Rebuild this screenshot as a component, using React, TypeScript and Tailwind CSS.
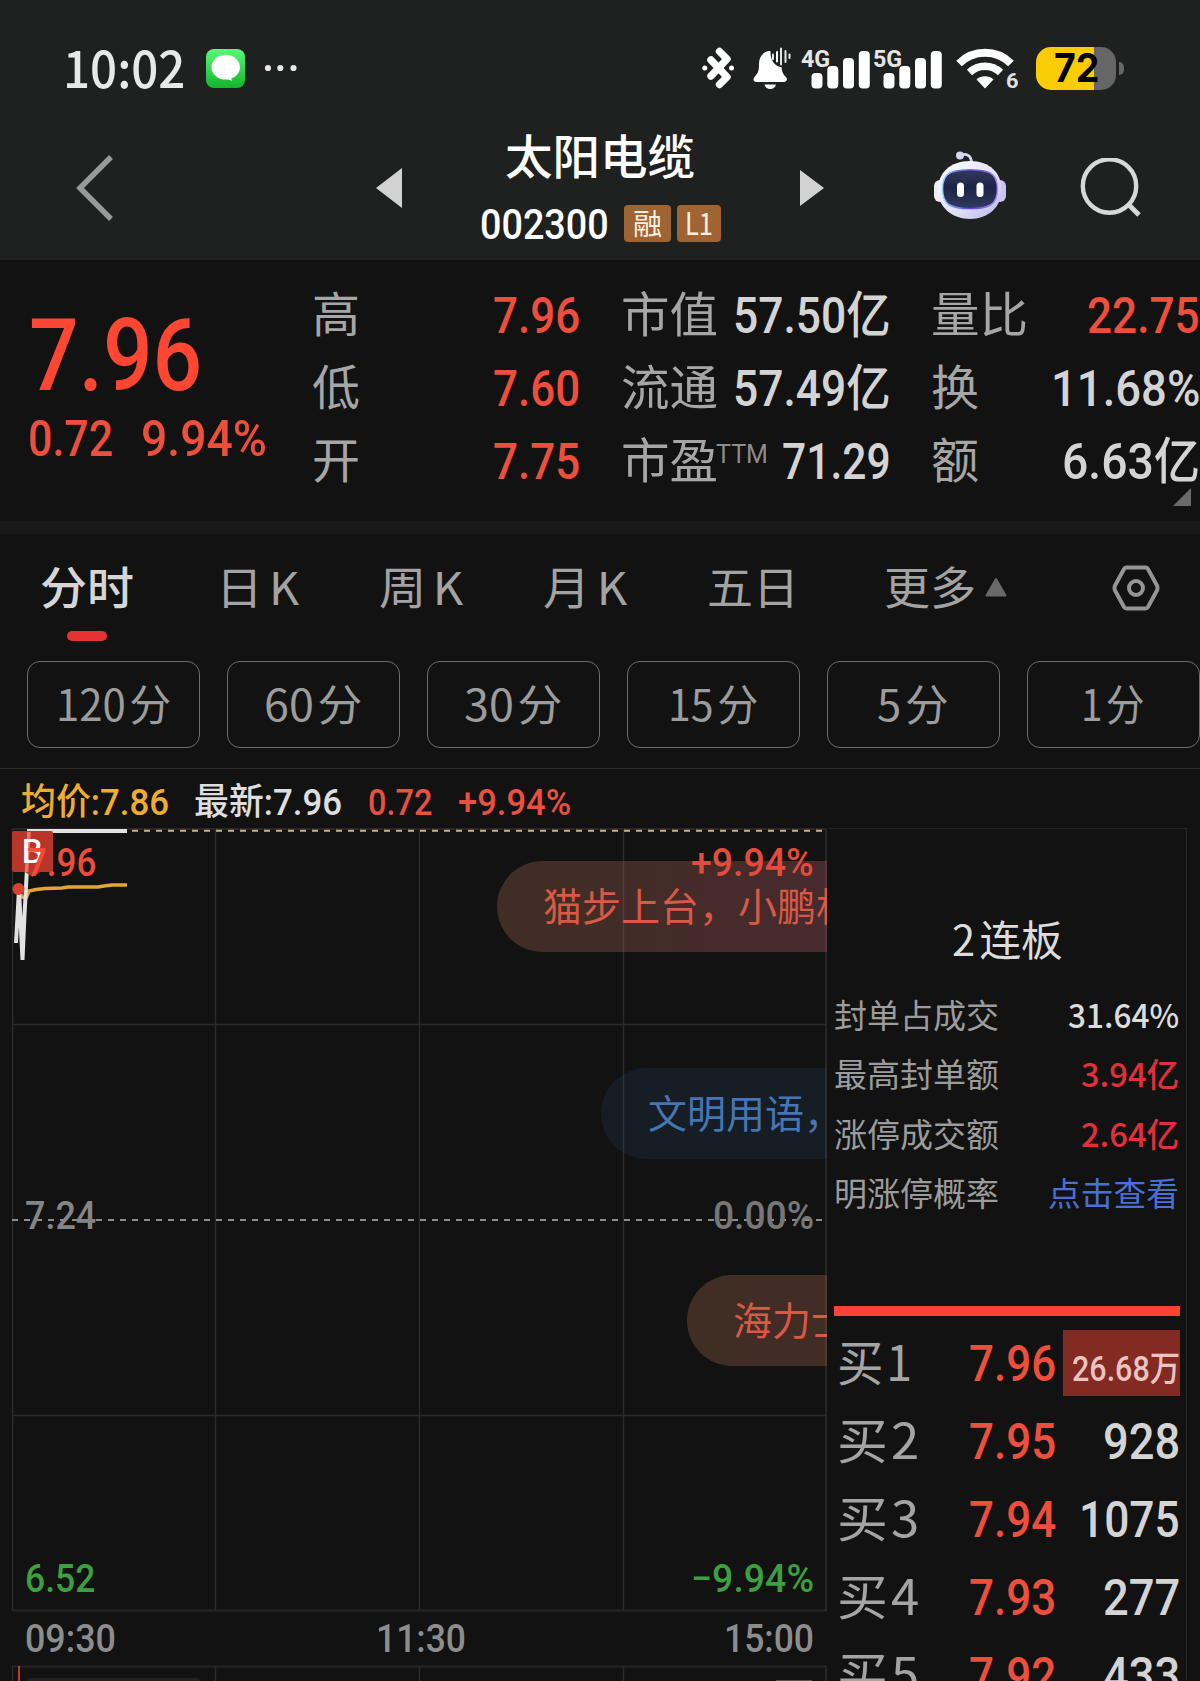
import { useLayoutEffect, useRef, useState } from "react";
import type { ReactNode } from "react";
import clsx from "clsx";

const DIN = "font-['Roboto','Noto_Sans_CJK_SC',sans-serif] font-medium";
const CJK = "font-['Noto_Sans_CJK_SC',sans-serif]";

/* One line of text, condensed or widened to fill the width of its box. */
function Fit({ children, className }: { children: ReactNode; className?: string }) {
  const box = useRef<HTMLSpanElement>(null);
  const inner = useRef<HTMLSpanElement>(null);
  const [scale, setScale] = useState(1);
  useLayoutEffect(() => {
    if (box.current && inner.current && inner.current.offsetWidth) {
      setScale(box.current.clientWidth / inner.current.offsetWidth);
    }
  }, []);
  return (
    <span ref={box} className={clsx("block shrink-0 whitespace-nowrap", className)}>
      <span ref={inner} className="inline-block origin-left" style={{ transform: `scaleX(${scale})` }}>
        {children}
      </span>
    </span>
  );
}

function Signal({ label }: { label: string }) {
  return (
    <div className="relative h-[42px] w-[69px] shrink-0">
      <svg className="block" width="69" height="42" viewBox="0 0 69 42" fill="#fff">
        <rect x="10.5" y="26" width="11" height="15.5" rx="4" />
        <rect x="26.3" y="19" width="11" height="22.5" rx="4" />
        <rect x="42" y="11" width="11" height="30.5" rx="4" />
        <rect x="57.8" y="4" width="11" height="37.5" rx="4" />
      </svg>
      <Fit className="absolute top-0 left-0 w-[29px] font-['Roboto',sans-serif] text-[24px] leading-[24px] font-bold text-[#e6e6e6]">
        {label}
      </Fit>
    </div>
  );
}

function StatusBar() {
  return (
    <div className="flex h-[136px] items-center">
      <Fit className={clsx(CJK, "mr-[2px] ml-[63px] w-[122px] pb-[5px] text-[51px] leading-[52px] font-medium text-[#e8e8e8]")}>10:02</Fit>
      <svg className="ml-[19px] shrink-0" width="39" height="39" viewBox="0 0 39 39">
        <defs>
          <linearGradient id="msg" x1="0" y1="0" x2="0" y2="1">
            <stop offset="0" stopColor="#5df777" />
            <stop offset="1" stopColor="#12b52c" />
          </linearGradient>
        </defs>
        <rect width="39" height="39" rx="8" fill="url(#msg)" />
        <ellipse cx="19.7" cy="18.2" rx="14.2" ry="12.4" fill="#fff" />
        <path d="M19 28.5 L24.5 27.5 L26 32 Z" fill="#fff" />
      </svg>
      <svg className="ml-[19px] shrink-0" width="34" height="10" viewBox="0 0 34 10" fill="#e8e8e8">
        <circle cx="4" cy="5" r="3.1" />
        <circle cx="16.3" cy="5" r="3.1" />
        <circle cx="29.5" cy="5" r="3.1" />
      </svg>
      <svg className="ml-[404px] shrink-0" width="32" height="42" viewBox="0 0 32 42" fill="none" stroke="#fff" strokeWidth="7.4" strokeLinecap="round" strokeLinejoin="round">
        <path d="M9 13 L25 30 L17.5 37.500" />
        <path d="M9 29 L25 12 L17.500 4.500" />
        <circle cx="2.8" cy="21" r="2.5" fill="#fff" stroke="none" />
        <circle cx="29.5" cy="21" r="2.5" fill="#fff" stroke="none" />
      </svg>
      <svg className="ml-[19px] shrink-0" width="38" height="42" viewBox="0 0 38 42">
        <path d="M16 4 C9 5 6 11 6 17 C6 25 4.500 26.500 1.500 30 C-0.500 32.500 0.500 35 3.500 35 H30.500 C33.500 35 35 32.500 33 30 C30 27 29 25 28.500 20 C23 20 17 14 17.500 4 Z" fill="#fff" />
        <path d="M11.500 37.500 H23 C22 41 19.500 42 17.300 42 C15 42 12.500 41 11.500 37.500 Z" fill="#fff" />
        <g stroke="#e6e6e6" strokeWidth="2" strokeLinecap="round">
          <path d="M20 7.500 V12" />
          <path d="M24 5 V14.500" stroke="#fff" />
          <path d="M28 1.500 V17.500" />
          <path d="M32.500 4 V15" />
          <path d="M36.500 7.500 V11" />
        </g>
      </svg>
      <div className="ml-[10px] flex gap-[3px]">
        <Signal label="4G" />
        <Signal label="5G" />
      </div>
      <svg className="ml-[14px] shrink-0" width="58" height="42" viewBox="0 0 58 42" fill="none" stroke="#fff">
        <path d="M3 16.500 A37 37 0 0 1 55 16.500" strokeWidth="8" />
        <path d="M13.500 25.500 A22.500 22.500 0 0 1 44.500 25.500" strokeWidth="7.500" />
        <path d="M20.500 32.500 C25 28.300 33 28.300 37.500 32.500 L29 41.500 Z" fill="#fff" stroke="none" />
      </svg>
      <Fit className="-ml-[8px] w-[12px] pt-[25px] font-['Roboto',sans-serif] text-[20px] leading-[20px] font-bold text-[#e0e0e0]">6</Fit>
      <div className="ml-[18px] flex h-[43px] w-[80px] shrink-0 items-center justify-center rounded-[15px] bg-[linear-gradient(90deg,#facc06_0_58px,#666_58px)]">
        <Fit className="w-[45px] font-['Inter',sans-serif] text-[40px] leading-[40px] font-bold text-black">72</Fit>
      </div>
      <div className="ml-[3px] h-[13px] w-[5px] rounded-r-full bg-[#666]" />
    </div>
  );
}

function Robot() {
  return (
    <svg className="shrink-0" width="72" height="76" viewBox="0 0 72 76">
      <defs>
        <linearGradient id="head" x1="0" y1="0" x2="1" y2="1">
          <stop offset="0" stopColor="#ffffff" />
          <stop offset="0.600" stopColor="#dfdef8" />
          <stop offset="1" stopColor="#b9b5ec" />
        </linearGradient>
        <linearGradient id="rim" x1="0" y1="0" x2="1" y2="0">
          <stop offset="0" stopColor="#8fd0ff" />
          <stop offset="0.500" stopColor="#5b3fc8" />
          <stop offset="1" stopColor="#a98bff" />
        </linearGradient>
        <linearGradient id="visor" x1="0" y1="0" x2="0" y2="1">
          <stop offset="0" stopColor="#34395c" />
          <stop offset="0.450" stopColor="#1c2447" />
          <stop offset="1" stopColor="#30395f" />
        </linearGradient>
      </defs>
      <path d="M26 8.500 C32 6 37 8 37.500 15" fill="none" stroke="#d8d7f2" strokeWidth="2.800" />
      <circle cx="26" cy="8.500" r="4" fill="#d6d5ee" />
      <rect x="0" y="33" width="12" height="22" rx="6" fill="#eeedfc" />
      <rect x="60" y="33" width="12" height="22" rx="6" fill="#c9c5f0" />
      <path d="M36 14 C56 14 67.500 26 67.500 43 C67.500 60 54 72 36 72 C18 72 4 60 4 43 C4 26 16 14 36 14 Z" fill="url(#head)" />
      <path d="M36 23 C54 23 63.500 25 63.500 42 C63.500 58 55 61.500 36 61.500 C17 61.500 8.500 58 8.500 42 C8.500 25 18 23 36 23 Z" fill="url(#visor)" stroke="url(#rim)" strokeWidth="1.500" />
      <rect x="23" y="35.500" width="7" height="14.500" rx="3.500" fill="#fff" />
      <rect x="42.500" y="35.500" width="7" height="14.500" rx="3.500" fill="#fff" />
    </svg>
  );
}

function NavBar() {
  return (
    <div className="flex h-[124px] items-center pb-[20px]">
      <svg className="ml-[76px] shrink-0" width="38" height="66" viewBox="0 0 38 66" fill="none" stroke="#999" strokeWidth="5.500">
        <path d="M35 2 L4 33 L35 64" />
      </svg>
      <svg className="ml-[262px] shrink-0" width="26" height="40" viewBox="0 0 26 40">
        <path d="M0 20 L26 0 V40 Z" fill="#d2d2d2" />
      </svg>
      <div className="ml-[79px] flex w-[240px] shrink-0 flex-col">
        <Fit className={clsx(CJK, "-mt-[16px] ml-[24px] w-[190px] text-[47px] leading-[60px] font-medium text-white")}>太阳电缆</Fit>
        <div className="mt-[21px] -mb-[6px] flex h-[38px] items-center">
          <Fit className={clsx(DIN, "-ml-[1px] w-[129px] text-[43px] leading-[38px] text-white")}>002300</Fit>
          <div className="ml-[15px] flex h-[37px] w-[47px] items-center justify-center rounded-[4px] bg-[#9f6434]">
            <Fit className={clsx(CJK, "w-[29px] pb-[3px] text-[29px] leading-[34px] text-[#fff2e2]")}>融</Fit>
          </div>
          <div className="ml-[6px] flex h-[37px] w-[44px] items-center justify-center rounded-[4px] bg-[#9f6434]">
            <Fit className={clsx(CJK, "w-[28px] pb-[4px] text-[31px] leading-[33px] text-[#fff2e2]")}>L1</Fit>
          </div>
        </div>
      </div>
      <svg className="ml-[79px] shrink-0" width="24" height="36" viewBox="0 0 24 36">
        <path d="M24 18 L0 0 V36 Z" fill="#d2d2d2" />
      </svg>
      <div className="ml-[110px] shrink-0 pb-[6px]">
        <Robot />
      </div>
      <svg className="ml-[74px] shrink-0" width="62" height="60" viewBox="0 0 62 60" fill="none" stroke="#d8d8d8">
        <circle cx="29.500" cy="28" r="26.700" strokeWidth="4.400" />
        <path d="M48.500 46.500 L59 57" strokeWidth="5" />
      </svg>
    </div>
  );
}

const LABEL = "font-['Noto_Sans_CJK_SC',sans-serif] font-normal pb-[9px] text-[48px] leading-[50px] text-[#a6a6a6]";
const VALUE = "font-['Roboto','Noto_Sans_CJK_SC',sans-serif] font-medium pt-[1px] text-[50px] leading-[50px]";
const RED = "text-[#ee4f3c]";
const WHITE = "text-[#d4d4d4]";

const quotes = [
  { a: "高", av: "7.96", b: "市值", bv: "57.50亿", bw: "w-[158px]", c: "量比", cl: "w-[97px]", cv: "22.75", cw: "w-[113px]", cc: RED },
  { a: "低", av: "7.60", b: "流通", bv: "57.49亿", bw: "w-[158px]", c: "换", cl: "w-[48px]", cv: "11.68%", cw: "w-[149px]", cc: WHITE },
  { a: "开", av: "7.75", b: "市盈", bv: "71.29", bw: "w-[109px]", c: "额", cl: "w-[48px]", cv: "6.63亿", cw: "w-[138px]", cc: WHITE },
];

function QuotePanel() {
  return (
    <div className="flex h-[261px]">
      <div className="w-[312px] shrink-0 pt-[46px] pl-[29px]">
        <Fit className={clsx(DIN, "w-[173px] text-[101px] leading-[100px] text-[#fd4733]")}>7.96</Fit>
        <div className="mt-[7px] -ml-px flex">
          <Fit className={clsx(VALUE, RED, "w-[85px]")}>0.72</Fit>
          <Fit className={clsx(VALUE, RED, "ml-[28px] w-[126px]")}>9.94%</Fit>
        </div>
      </div>
      <div className="flex flex-col pt-[19px]">
        {quotes.map((q) => (
          <div key={q.a} className="flex h-[73px] items-center">
            <Fit className={clsx(LABEL, "w-[48px]")}>{q.a}</Fit>
            <div className="flex w-[220px] justify-end">
              <Fit className={clsx(VALUE, RED, "w-[87px]")}>{q.av}</Fit>
            </div>
            <div className="ml-[41px] flex w-[270px] items-center">
              <Fit className={clsx(LABEL, "w-[97px]")}>{q.b}</Fit>
              {q.b === "市盈" && (
                <Fit className="-ml-[2px] w-[52px] pb-[16px] font-['Roboto',sans-serif] text-[26px] leading-[30px] font-normal text-[#8c8c8c]">TTM</Fit>
              )}
              <Fit className={clsx(VALUE, WHITE, q.bw, "ml-auto")}>{q.bv}</Fit>
            </div>
            <div className="ml-[40px] flex w-[269px] items-center justify-between">
              <Fit className={clsx(LABEL, q.cl)}>{q.c}</Fit>
              <Fit className={clsx(VALUE, q.cc, q.cw)}>{q.cv}</Fit>
            </div>
          </div>
        ))}
        <svg className="-mt-[10px] mr-[9px] shrink-0 self-end" width="18" height="18" viewBox="0 0 18 18">
          <path d="M18 0 V18 H0 Z" fill="#6a6a6a" />
        </svg>
      </div>
    </div>
  );
}

const tabs = [
  { t: "分时", c: "ml-[40px] w-[94px] font-medium text-[#d6d6d6]" },
  { t: "日 K", c: "ml-[82px] w-[83px] text-[#a3a3a3]" },
  { t: "周 K", c: "ml-[80px] w-[84px] text-[#a3a3a3]" },
  { t: "月 K", c: "ml-[80px] w-[84px] text-[#a3a3a3]" },
  { t: "五日", c: "ml-[80px] w-[92px] text-[#a3a3a3]" },
  { t: "更多", c: "ml-[85px] w-[92px] text-[#a3a3a3]" },
];

function Tabs() {
  return (
    <div className="h-[127px]">
      <div className="flex h-[97px] items-center pt-[9px]">
        {tabs.map((t) => (
          <Fit key={t.t} className={clsx("pb-[3px] font-['Noto_Sans_CJK_SC',sans-serif] text-[45px] leading-[50px] [word-spacing:-4px]", t.c)}>
            {t.t}
          </Fit>
        ))}
        <svg className="ml-[9px] shrink-0" width="22" height="20" viewBox="0 0 22 20">
          <path d="M11 2 L20.500 18.500 H1.500 Z" fill="#696969" stroke="#696969" strokeWidth="2" strokeLinejoin="round" />
        </svg>
        <svg className="mt-px ml-[105px] shrink-0" width="48" height="46" viewBox="0 0 48 46" fill="none" stroke="#959595" strokeWidth="4">
          <path d="M14.500 2.500 H33.500 Q35 2.500 36 4 L45 20.500 Q46 23 45 25.500 L36 42 Q35 43.500 33.500 43.500 H14.500 Q13 43.500 12 42 L3 25.500 Q2 23 3 20.500 L12 4 Q13 2.500 14.500 2.500 Z" />
          <circle cx="24" cy="23" r="7" />
        </svg>
      </div>
      <div className="ml-[67px] h-[10px] w-[40px] rounded-full bg-[#e63233]" />
    </div>
  );
}

const periods = [
  { t: "120 分", c: "w-[115px]" },
  { t: "60 分", c: "w-[98px]" },
  { t: "30 分", c: "w-[98px]" },
  { t: "15 分", c: "w-[90px]" },
  { t: "5 分", c: "w-[72px]" },
  { t: "1 分", c: "w-[64px]" },
];

function Periods() {
  return (
    <div className="flex h-[107px] gap-[27px] pl-[27px]">
      {periods.map((p) => (
        <div key={p.t} className="flex h-[87px] w-[173px] shrink-0 items-center justify-center rounded-[13px] border border-[#6e6e6e]">
          <Fit className={clsx(CJK, p.c, "-ml-px pb-[6px] text-[43px] leading-[50px] text-[#9c9c9c] [word-spacing:-6px]")}>{p.t}</Fit>
        </div>
      ))}
    </div>
  );
}

function Legend() {
  const base = "font-['Roboto','Noto_Sans_CJK_SC',sans-serif] font-medium text-[37px] leading-[50px]";
  return (
    <div className="flex h-[60px] items-center border-t border-[#2e2e2e] pt-[8px] pl-[21px]">
      <Fit className={clsx(base, "w-[148px] text-[#efac32]")}>均价:7.86</Fit>
      <Fit className={clsx(base, "ml-[25px] w-[148px] text-[#dedede]")}>最新:7.96</Fit>
      <Fit className={clsx(base, "ml-[26px] w-[64px] text-[#e9503f]")}>0.72</Fit>
      <Fit className={clsx(base, "ml-[26px] w-[113px] text-[#e9503f]")}>+9.94%</Fit>
    </div>
  );
}

function Chart() {
  const num = "absolute font-['Roboto',sans-serif] font-medium text-[39px] leading-[40px]";
  const pill = "absolute right-px flex h-[91px] items-center overflow-hidden rounded-l-full";
  const msg = "shrink-0 whitespace-nowrap pb-[5px] font-['Noto_Sans_CJK_SC',sans-serif] text-[39px] leading-[50px]";
  return (
    <div className="relative h-[853px] w-[828px] shrink-0 overflow-hidden">
      <svg className="block" width="828" height="853" viewBox="0 828 828 853" fill="none">
        <g stroke="#2b2b2b" strokeWidth="1.500">
          <path d="M12.500 829 V1610 M215.500 829 V1610 M419.500 829 V1610 M623.500 829 V1610" />
          <path d="M12 1024.500 H827 M12 1415.500 H827" />
        </g>
        <path d="M12 829 H827 M826 829 V1610 M12 1610.500 H827 M12 1666.500 H827 M826 1666 V1681" stroke="#262626" strokeWidth="2" />
        <path d="M12.500 1666 V1681 M215.500 1666 V1681 M419.500 1666 V1681 M623.500 1666 V1681" stroke="#2b2b2b" strokeWidth="1.500" />
        <rect x="26" y="1678" width="175" height="20" rx="5" fill="#222" />
        <rect x="776" y="1680" width="36" height="3" fill="#555" />
        <path d="M19 1666 V1681" stroke="#ee4f3c" strokeWidth="1.500" />
        <path d="M132 830.800 H823" stroke="#cfb083" strokeWidth="2" strokeDasharray="6 6" />
        <path d="M12 1220 H823" stroke="#8c8c8c" strokeWidth="1.800" strokeDasharray="6 6" />
        <path d="M20 893 L22 897 L26 898 L29 891 L36 889.500 L45 888.500 L62 888 L68 887 L98 887 L104 886 L112 885 L127 885" stroke="#e3a537" strokeWidth="3.600" />
        <path d="M16 943 L19 889 L22.500 960 L24.500 915 L29 831 L127 831" stroke="#e2e2e2" strokeWidth="4" />
        <path d="M14 831 H51 Q53 831 53 833 V870 Q53 872 51 872 H40 L32.500 877 L25 872 H14 Q12 872 12 870 V833 Q12 831 14 831 Z" fill="#b8352a" />
        <path d="M29 832 L26.500 872" stroke="#ee7468" strokeWidth="3.500" />
        <circle cx="18.500" cy="889" r="6" fill="#d5432f" />
      </svg>
      <div className={clsx(pill, "top-[33px] w-[330px] bg-[linear-gradient(90deg,#ca7e5a40,#e6727e40)] pl-[46px]")}>
        <span className={clsx(msg, "text-[#d85945]")}>猫步上台，小鹏机</span>
      </div>
      <div className={clsx(pill, "top-[240px] w-[226px] bg-[#3a78b81c] pl-[47px]")}>
        <span className={clsx(msg, "text-[#4576b3]")}>文明用语，</span>
      </div>
      <div className={clsx(pill, "top-[447px] w-[140px] bg-[linear-gradient(90deg,#ca7e5a40,#d07c6040)] pl-[46px]")}>
        <span className={clsx(msg, "text-[#d85945]")}>海力士</span>
      </div>
      <span className="absolute top-[5px] left-[21px] font-['Noto_Sans_CJK_SC',sans-serif] text-[33px] leading-[32px] font-medium text-white">B</span>
      <Fit className={clsx(num, "top-[15px] left-[27px] w-[69px] text-[#f04c3a]")}>7.96</Fit>
      <Fit className={clsx(num, "top-[15px] left-[691px] w-[123px] text-[#e24c3b]")}>+9.94%</Fit>
      <Fit className={clsx(num, "top-[368px] left-[25px] w-[71px] text-[#858585]")}>7.24</Fit>
      <Fit className={clsx(num, "top-[368px] left-[713px] w-[101px] text-[#777]")}>0.00%</Fit>
      <Fit className={clsx(num, "top-[731px] left-[25px] w-[70px] text-[#3d9f40]")}>6.52</Fit>
      <Fit className={clsx(num, "top-[731px] left-[691px] w-[123px] text-[#3d9f40]")}>−9.94%</Fit>
      <Fit className={clsx(num, "top-[791px] left-[25px] w-[91px] text-[#8d8d8d]")}>09:30</Fit>
      <Fit className={clsx(num, "top-[791px] left-[376px] w-[90px] text-[#8d8d8d]")}>11:30</Fit>
      <Fit className={clsx(num, "top-[791px] left-[724px] w-[90px] text-[#8d8d8d]")}>15:00</Fit>
    </div>
  );
}

const stats = [
  { l: "封单占成交", v: "31.64%", c: "w-[111px] font-medium text-[#dcdcdc]" },
  { l: "最高封单额", v: "3.94亿", c: "w-[98px] font-medium text-[#e2303a]" },
  { l: "涨停成交额", v: "2.64亿", c: "w-[98px] font-medium text-[#e2303a]" },
  { l: "明涨停概率", v: "点击查看", c: "w-[131px] text-[#4a6fd6]" },
];

const bids = [
  { l: "买 1", lw: "w-[75px]", p: "7.96", v: "26.68万" },
  { l: "买 2", lw: "w-[82px]", p: "7.95", v: "928", w: "w-[77px]" },
  { l: "买 3", lw: "w-[82px]", p: "7.94", v: "1075", w: "w-[101px]" },
  { l: "买 4", lw: "w-[82px]", p: "7.93", v: "277", w: "w-[77px]" },
  { l: "买 5", lw: "w-[82px]", p: "7.92", v: "433", w: "w-[77px]" },
];

function SidePanel() {
  return (
    <div className="flex h-[853px] w-[359px] shrink-0 flex-col overflow-hidden border-t border-r border-[#242424] pl-[6px]">
      <div className="flex h-[158px] shrink-0 justify-center pt-[84px] pr-[5px]">
        <Fit className={clsx(CJK, "w-[111px] text-[42px] leading-[50px] text-[#dcdcdc] [word-spacing:-5px]")}>2 连板</Fit>
      </div>
      {stats.map((s) => (
        <div key={s.l} className="flex h-[59.300px] shrink-0 items-center justify-between pr-[7px]">
          <Fit className={clsx(CJK, "w-[165px] pb-[5px] text-[33px] leading-[48px] text-[#9c9c9c]")}>{s.l}</Fit>
          <Fit className={clsx(CJK, s.c, "pb-[5px] text-[33px] leading-[48px]")}>{s.v}</Fit>
        </div>
      ))}
      <div className="mt-[82px] h-[10px] w-[346px] shrink-0 bg-[#fc4432]" />
      <div className="flex flex-col pt-[8px]">
        {bids.map((b) => (
          <div key={b.l} className="flex h-[78px] shrink-0 items-center pl-[3px]">
            <div className="w-[132px]">
              <Fit className={clsx(CJK, b.lw, "pb-[6px] text-[49px] leading-[60px] text-[#a4a4a4] [word-spacing:-8px]")}>{b.l}</Fit>
            </div>
            <Fit className={clsx(VALUE, RED, "w-[87px]")}>{b.p}</Fit>
            {b.w ? (
              <div className="flex w-[124px] justify-end">
                <Fit className={clsx(VALUE, WHITE, b.w)}>{b.v}</Fit>
              </div>
            ) : (
              <div className="ml-[7px] flex h-[66px] w-[117px] items-center justify-end bg-[#832a23] pt-[14px]">
                <Fit className={clsx(DIN, "w-[108px] text-[35px] leading-[40px] text-[#e9c4c1]")}>{b.v}</Fit>
              </div>
            )}
          </div>
        ))}
      </div>
    </div>
  );
}

export default function App() {
  return (
    <div className="h-[1681px] w-[1200px] overflow-hidden bg-[#121212]">
      <div className="h-[260px] bg-[#1f2120]">
        <StatusBar />
        <NavBar />
      </div>
      <QuotePanel />
      <div className="h-[13px] bg-[#191919]" />
      <Tabs />
      <Periods />
      <Legend />
      <div className="flex">
        <Chart />
        <SidePanel />
      </div>
    </div>
  );
}
